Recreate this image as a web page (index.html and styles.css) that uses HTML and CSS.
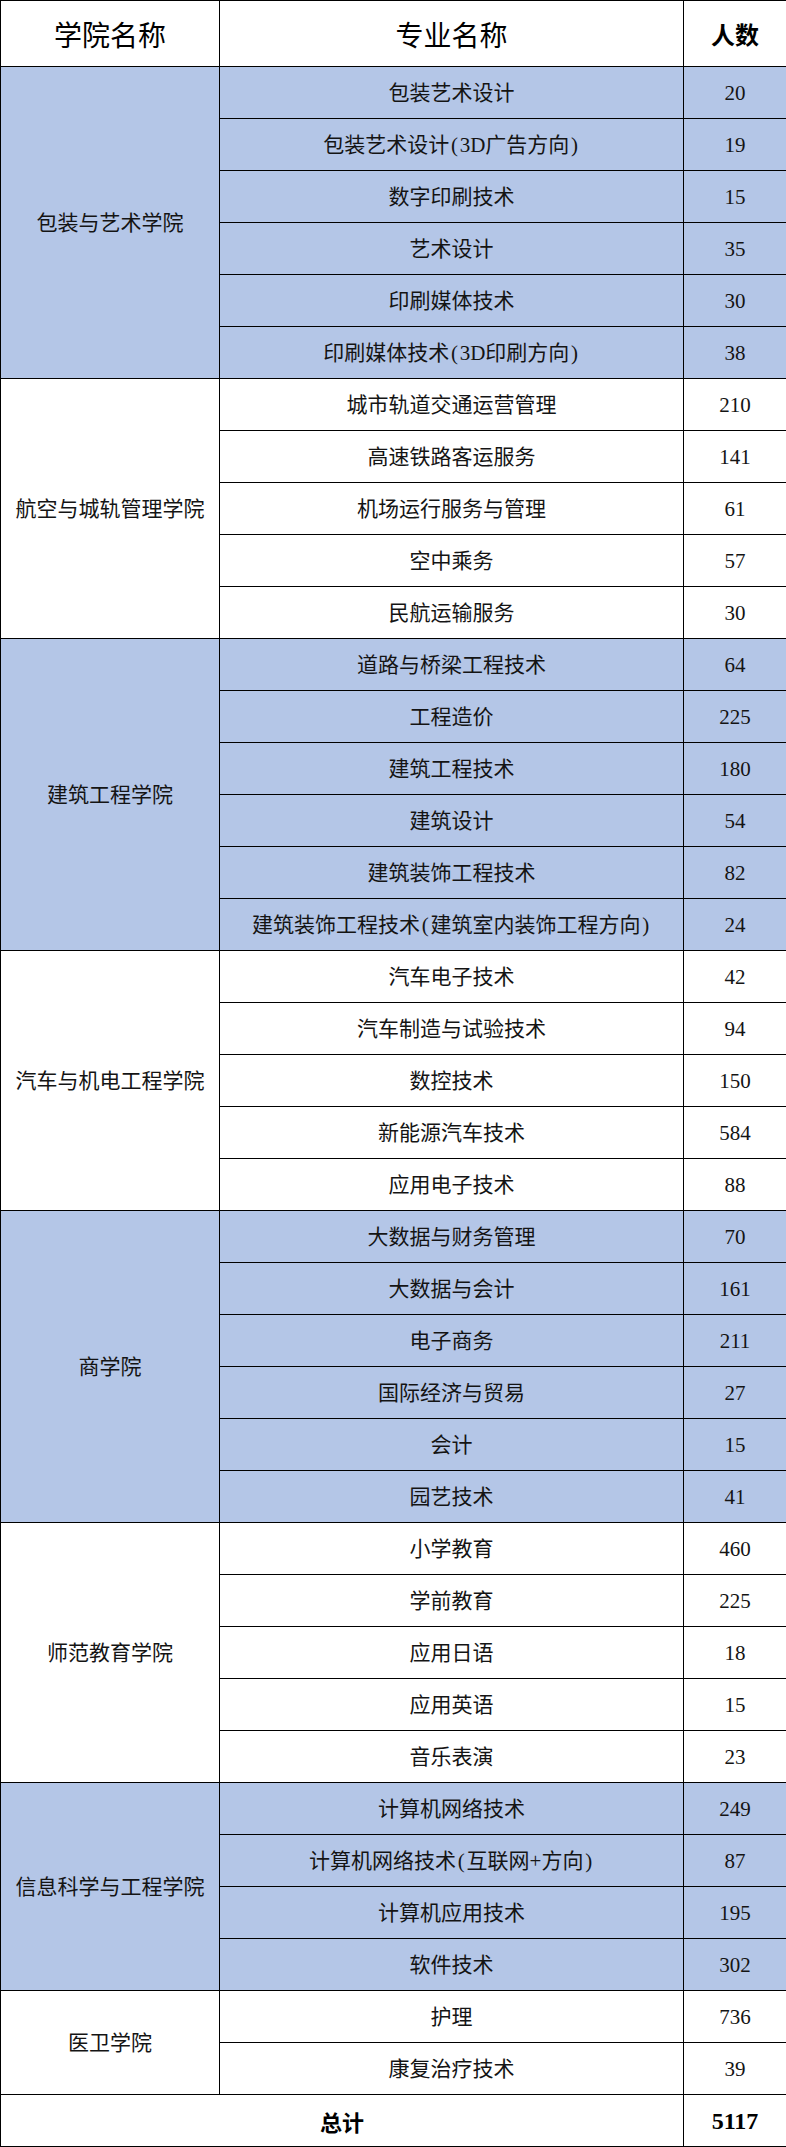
FILE: index.html
```html
<!DOCTYPE html>
<html lang="zh-CN">
<head>
<meta charset="utf-8">
<title>专业人数</title>
<link rel="stylesheet" href="styles.css">
</head>
<body>
<table class="grid">
  <colgroup>
    <col class="c-college">
    <col class="c-major">
    <col class="c-num">
  </colgroup>
  <thead>
    <tr class="head">
      <th class="h-college">学院名称</th>
      <th class="h-major">专业名称</th>
      <th class="h-num">人数</th>
    </tr>
  </thead>
  <tbody class="blue">
    <tr><td class="college" rowspan="6">包装与艺术学院</td><td>包装艺术设计</td><td class="num">20</td></tr>
    <tr><td>包装艺术设计<span class="p">(</span>3D广告方向<span class="p">)</span></td><td class="num">19</td></tr>
    <tr><td>数字印刷技术</td><td class="num">15</td></tr>
    <tr><td>艺术设计</td><td class="num">35</td></tr>
    <tr><td>印刷媒体技术</td><td class="num">30</td></tr>
    <tr><td>印刷媒体技术<span class="p">(</span>3D印刷方向<span class="p">)</span></td><td class="num">38</td></tr>
  </tbody>
  <tbody class="white">
    <tr><td class="college" rowspan="5">航空与城轨管理学院</td><td>城市轨道交通运营管理</td><td class="num">210</td></tr>
    <tr><td>高速铁路客运服务</td><td class="num">141</td></tr>
    <tr><td>机场运行服务与管理</td><td class="num">61</td></tr>
    <tr><td>空中乘务</td><td class="num">57</td></tr>
    <tr><td>民航运输服务</td><td class="num">30</td></tr>
  </tbody>
  <tbody class="blue">
    <tr><td class="college" rowspan="6">建筑工程学院</td><td>道路与桥梁工程技术</td><td class="num">64</td></tr>
    <tr><td>工程造价</td><td class="num">225</td></tr>
    <tr><td>建筑工程技术</td><td class="num">180</td></tr>
    <tr><td>建筑设计</td><td class="num">54</td></tr>
    <tr><td>建筑装饰工程技术</td><td class="num">82</td></tr>
    <tr><td>建筑装饰工程技术<span class="p">(</span>建筑室内装饰工程方向<span class="p">)</span></td><td class="num">24</td></tr>
  </tbody>
  <tbody class="white">
    <tr><td class="college" rowspan="5">汽车与机电工程学院</td><td>汽车电子技术</td><td class="num">42</td></tr>
    <tr><td>汽车制造与试验技术</td><td class="num">94</td></tr>
    <tr><td>数控技术</td><td class="num">150</td></tr>
    <tr><td>新能源汽车技术</td><td class="num">584</td></tr>
    <tr><td>应用电子技术</td><td class="num">88</td></tr>
  </tbody>
  <tbody class="blue">
    <tr><td class="college" rowspan="6">商学院</td><td>大数据与财务管理</td><td class="num">70</td></tr>
    <tr><td>大数据与会计</td><td class="num">161</td></tr>
    <tr><td>电子商务</td><td class="num">211</td></tr>
    <tr><td>国际经济与贸易</td><td class="num">27</td></tr>
    <tr><td>会计</td><td class="num">15</td></tr>
    <tr><td>园艺技术</td><td class="num">41</td></tr>
  </tbody>
  <tbody class="white">
    <tr><td class="college" rowspan="5">师范教育学院</td><td>小学教育</td><td class="num">460</td></tr>
    <tr><td>学前教育</td><td class="num">225</td></tr>
    <tr><td>应用日语</td><td class="num">18</td></tr>
    <tr><td>应用英语</td><td class="num">15</td></tr>
    <tr><td>音乐表演</td><td class="num">23</td></tr>
  </tbody>
  <tbody class="blue">
    <tr><td class="college" rowspan="4">信息科学与工程学院</td><td>计算机网络技术</td><td class="num">249</td></tr>
    <tr><td>计算机网络技术<span class="p">(</span>互联网+方向<span class="p">)</span></td><td class="num">87</td></tr>
    <tr><td>计算机应用技术</td><td class="num">195</td></tr>
    <tr><td>软件技术</td><td class="num">302</td></tr>
  </tbody>
  <tbody class="white">
    <tr><td class="college" rowspan="2">医卫学院</td><td>护理</td><td class="num">736</td></tr>
    <tr><td>康复治疗技术</td><td class="num">39</td></tr>
  </tbody>
  <tfoot>
    <tr class="total"><td colspan="2" class="total-label">总计</td><td class="num total-num">5117</td></tr>
  </tfoot>
</table>
</body>
</html>
```

FILE: styles.css
```css
html, body {
  margin: 0;
  padding: 0;
  background: #ffffff;
}

.grid {
  width: 786px;
  border-collapse: collapse;
  table-layout: fixed;
  font-family: "Liberation Serif", "Noto Sans CJK SC", serif;
  color: #141414;
}

.c-college { width: 219px; }
.c-major { width: 464px; }
.c-num { width: 103px; }

.grid th,
.grid td {
  border: 1px solid #000;
  text-align: center;
  vertical-align: middle;
  padding: 0;
  font-size: 21px;
  font-weight: normal;
  line-height: 26px;
}

.grid .p {
  display: inline-block;
  width: 0.5em;
  text-align: center;
}

.grid .head { height: 66px; }
.grid .head th { background: #fff; color: #000; }

.grid .h-college,
.grid .h-major {
  font-size: 28px;
  line-height: 34px;
  font-family: "Noto Sans CJK SC", sans-serif;
  font-weight: 400;
}

.grid .h-num {
  font-size: 24px;
  line-height: 30px;
  font-family: "Noto Sans CJK SC", sans-serif;
  font-weight: 700;
}

.grid tbody tr { height: 52px; }

.grid .blue td { background: #b4c6e7; }
.grid .white td { background: #ffffff; }

.grid .total { height: 52px; }

.grid .total-label {
  font-family: "Noto Sans CJK SC", sans-serif;
  font-weight: 700;
  font-size: 22px;
  color: #000;
}

.grid .total-num {
  font-weight: 700;
  font-size: 24px;
  color: #000;
}
```
